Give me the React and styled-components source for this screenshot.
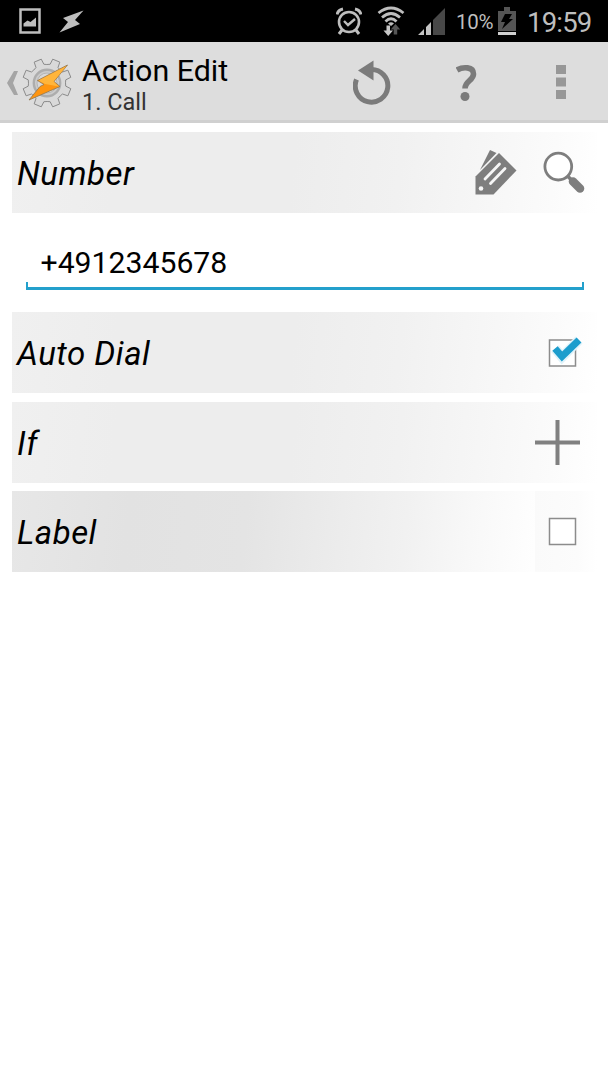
import React from 'react'
import styled, { createGlobalStyle } from 'styled-components'

const GlobalStyle = createGlobalStyle`
  * {
    box-sizing: border-box;
  }
  body {
    margin: 0;
    background-color: #fff;
    font-family: Roboto, "Liberation Sans", sans-serif;
  }
`
const Screen = styled.div`
  width: 608px;
  height: 1080px;
  overflow: hidden;
  background-color: #fff;
`
const StatusBar = styled.div`
  height: 42px;
  display: flex;
  align-items: center;
  justify-content: space-between;
  padding: 0 16px 0 18px;
  background-color: #000;
  color: #bebebe;
`
const StatusGroup = styled.div`
  height: 42px;
  display: flex;
  align-items: center;
`
const Icon = styled.svg`
  display: block;
  flex: none;
  margin-left: ${(props) => props.$gap || 0}px;
`
const Battery = styled.span`
  width: 37px;
  font-size: 20.5px;
  line-height: 24px;
  letter-spacing: -0.3px;
  margin: 2px 0 0 10px;
`
const Clock = styled.span`
  width: 65px;
  font-size: 27.5px;
  line-height: 32px;
  letter-spacing: -0.8px;
  margin: 3px 0 0 11px;
`
const ActionBar = styled.header`
  height: 81px;
  display: flex;
  align-items: center;
  padding: 3px 42px 0 6px;
  background-color: #ddd;
  border-bottom: 3px solid #d0d0d0;
`
const Titles = styled.div`
  flex: 1;
  margin: 5px 0 0 10px;
`
const Title = styled.h1`
  margin: 0;
  font-size: 30.4px;
  font-weight: 400;
  line-height: 34px;
  color: #000;
`
const Subtitle = styled.div`
  font-size: 23.5px;
  line-height: 28px;
  color: #333;
`
const Form = styled.main`
  padding: 9px 11px 0 12px;
`
const Row = styled.section`
  height: 80.7px;
  display: flex;
  align-items: center;
  margin-bottom: 8.8px;
  padding-left: 5px;
  background: ${(props) =>
    props.$dark
      ? `linear-gradient(90deg, #fafafa, #fcfcfc 70%, #fff) right / 62px 100% no-repeat,
         linear-gradient(96deg, #e7e7e7 0%, #e2e2e2 20%, #e4e4e4 40%, #e8e8e8 48%, #ececec 56%, #f1f1f1 67%, #f8f8f8 78%, #fefefe 89%)`
      : 'linear-gradient(96deg, #f0f0f0 0%, #ededed 18%, #ededed 48%, #f1f1f1 66%, #f7f7f7 82%, #fbfbfb 92%, #fff 100%)'};
`
const RowLabel = styled.h2`
  flex: 1;
  margin: 0;
  padding-top: 3.5px;
  font-size: 33px;
  font-style: italic;
  font-weight: 400;
  line-height: 40px;
  letter-spacing: 0.5px;
  color: #000;
`
const Field = styled.div`
  height: 90.9px;
  padding: 20.500px 13px 0 14px;
`
const NumberInput = styled.div`
  padding: 3.500px 14px 0 14.500px;
  height: 40px;
  font-size: 30.2px;
  line-height: 36px;
  color: #000;
`
const Underline = styled.div`
  height: 8px;
  border: solid #23a0cc;
  border-width: 0 2px 3px;
`

const Alarm = () => (
  <Icon width="26" height="28" viewBox="0 0 26 28" fill="none" stroke="#bebebe">
    <circle cx="13" cy="15" r="10" strokeWidth="2.6" />
    <path d="M8 14l4 4 7-6" strokeWidth="2.4" />
    <path d="M1 7.5Q2 3 7 2M25 7.5Q24 3 19 2" strokeWidth="3" />
    <path d="M6 23l-3 4M20 23l3 4" strokeWidth="3" />
  </Icon>
)

const Wifi = () => (
  <Icon $gap={15} width="28" height="30" viewBox="0 0 28 30" fill="none" stroke="#bebebe">
    <path d="M1.5 7Q14-3 26.5 7" strokeWidth="2.8" />
    <path d="M5 11.5Q14 3.5 23 11.5" strokeWidth="2.8" />
    <path d="M8.5 15.5Q14 10 19.5 15.5" strokeWidth="2.8" />
    <path d="M11 17.5Q14 15 17 17.5L14 20z" fill="#bebebe" stroke="none" />
    <path d="M9.500 19.500h3.500v5h3L11.200 30l-4.700-5.500h3z" fill="#c8c8c8" stroke="none" />
    <path d="M16.700 28.500h3.500v-5h3L18.500 18l-4.800 5.500h3z" fill="#555" stroke="none" />
  </Icon>
)

const Signal = () => (
  <Icon $gap={13} width="28" height="27" viewBox="0 0 28 27">
    <path d="M15 12L27 0v27H15z" fill="#484848" />
    <path d="M0 27l6-6v6zM8 19l5-5v13H8z" fill="#c4c4c4" />
  </Icon>
)

const BatteryIcon = () => (
  <Icon $gap={5} width="18" height="28" viewBox="0 0 18 28">
    <path d="M6 0h6v4h6v20H0V4h6z" fill="#555" />
    <path d="M0 25h18v3H0z" fill="#d0d0d0" />
    <path d="M7 7h7l-3 5h4L4 22l3-7H3z" fill="#000" />
  </Icon>
)

const Gear = () => {
  const teeth = []
  for (let i = 0; i < 8; i++) {
    const a = i * 45 + 22.5
    const pt = (r, deg) => {
      const t = ((a + deg) * Math.PI) / 180
      return `${(25 + r * Math.cos(t)).toFixed(2)} ${(25 + r * Math.sin(t)).toFixed(2)}`
    }
    teeth.push(`${pt(19, -13)} L${pt(24.5, -9)} L${pt(24.5, 9)} L${pt(19, 13)} L${pt(18.5, 22)}`)
  }
  return (
    <Icon $gap={3} width="50" height="50" viewBox="0 0 50 50">
      <path d={`M${teeth.join(' L')}Z`} fill="#d9d9d9" stroke="#8b8b8b" strokeWidth="1" />
      <circle cx="25" cy="25" r="13.200" fill="#cbcbcb" stroke="#adadad" strokeWidth="2.400" />
      <circle cx="25" cy="25" r="10" fill="#d8d8d8" stroke="#b5b5b5" />
      <path d="M45.500 7L15.500 22.500l6.500 4-4 2L7 42l31-13.500-6-5z" fill="#ff9510" stroke="#8f7650" strokeWidth=".8" />
      <path d="M44.500 8L16.500 22.500l6.500 3.500 14 2.500-5.500-5z" fill="#ffb53c" />
    </Icon>
  )
}

function App() {
  return (
    <Screen>
      <GlobalStyle />
      <StatusBar>
        <StatusGroup>
          <Icon width="24" height="26" viewBox="0 0 24 26">
            <path d="M2.500 1.500h19v23h-19z" fill="none" stroke="#bebebe" strokeWidth="2.500" />
            <path d="M5.500 18.500v-3l4-3 3 1.500 5.500-4.500v9z" fill="#bebebe" />
          </Icon>
          <Icon $gap={17} width="25" height="23" viewBox="0 0 25 23">
            <path d="M24.500.5L4 8l5 4L.5 22.500 21 14l-5-4z" fill="#bebebe" />
          </Icon>
        </StatusGroup>
        <StatusGroup>
          <Alarm />
          <Wifi />
          <Signal />
          <Battery>10%</Battery>
          <BatteryIcon />
          <Clock>19:59</Clock>
        </StatusGroup>
      </StatusBar>
      <ActionBar>
        <Icon width="13" height="24" viewBox="0 0 13 24">
          <path d="M12 0H8L1 12l7 12h4L7 12z" fill="#a5a5a5" />
        </Icon>
        <Gear />
        <Titles>
          <Title>Action Edit</Title>
          <Subtitle>1. Call</Subtitle>
        </Titles>
        <Icon width="38" height="46" viewBox="0 0 38 46">
          <path d="M3.500 19.500A16.300 16.300 0 1 0 18 9.500" fill="none" stroke="#7b7b7b" strokeWidth="5" />
          <path d="M5 10.500L20.500.5v20z" fill="#7b7b7b" />
        </Icon>
        <Icon $gap={65} width="22" height="38" viewBox="0 0 22 38">
          <path d="M1 6C7 2.500 17.500 2.500 17.500 10c0 6.500-8.500 7-8.500 14.500" fill="none" stroke="#7b7b7b" strokeWidth="5.600" />
          <circle cx="9" cy="32.500" r="4.500" fill="#7b7b7b" />
        </Icon>
        <Icon $gap={78} width="10" height="35" viewBox="0 0 10 35" fill="#979797">
          <path d="M0 0h10v9H0zM0 12.500h10v9H0zM0 25h10v9H0z" />
        </Icon>
      </ActionBar>
      <Form>
        <Row>
          <RowLabel>Number</RowLabel>
          <Icon width="42" height="45" viewBox="0 0 42 45">
            <path d="M15 0l6.500 3L5 20z" fill="#7e7e7e" />
            <path d="M24 3l17.500 17.500-23 24H.5v-18z" fill="#7e7e7e" />
            <path d="M10 29l14.500-15M15.500 33.500l14.500-15" stroke="#f6f6f6" strokeWidth="2.800" strokeLinecap="round" />
            <circle cx="6" cy="38.500" r="2.300" fill="#f6f6f6" />
          </Icon>
          <Icon $gap={25} width="55" height="43" viewBox="0 0 55 43">
            <circle cx="16.300" cy="15.600" r="13.400" fill="#fff" stroke="#7e7e7e" strokeWidth="2.800" />
            <path d="M26 25.500l4 4" stroke="#7e7e7e" strokeWidth="3.500" />
            <path d="M31 30.500l7 7" stroke="#7e7e7e" strokeWidth="8.500" strokeLinecap="round" />
          </Icon>
        </Row>
        <Field>
          <NumberInput>+4912345678</NumberInput>
          <Underline />
        </Field>
        <Row>
          <RowLabel>Auto Dial</RowLabel>
          <Icon width="49" height="34" viewBox="0 0 49 34">
            <path d="M1.500 4h26v26h-26z" fill="#fff" stroke="#8c8c8c" strokeWidth="1.500" />
            <path d="M7 12.500l7 8.500L31 4" fill="none" stroke="#e0f3fa" strokeWidth="10" />
            <path d="M7 12.500l7 8L31 4" fill="none" stroke="#1c9dcd" strokeWidth="7" />
          </Icon>
        </Row>
        <Row>
          <RowLabel>If</RowLabel>
          <Icon width="62" height="45" viewBox="0 0 62 45">
            <path d="M22.500 0v45M0 22.500h45" stroke="#808080" strokeWidth="4" />
          </Icon>
        </Row>
        <Row $dark>
          <RowLabel>Label</RowLabel>
          <Icon width="49" height="29" viewBox="0 0 49 29">
            <path d="M1.500 1.500h26v26h-26z" fill="#fff" stroke="#8c8c8c" strokeWidth="1.500" />
          </Icon>
        </Row>
      </Form>
    </Screen>
  )
}

export default App
